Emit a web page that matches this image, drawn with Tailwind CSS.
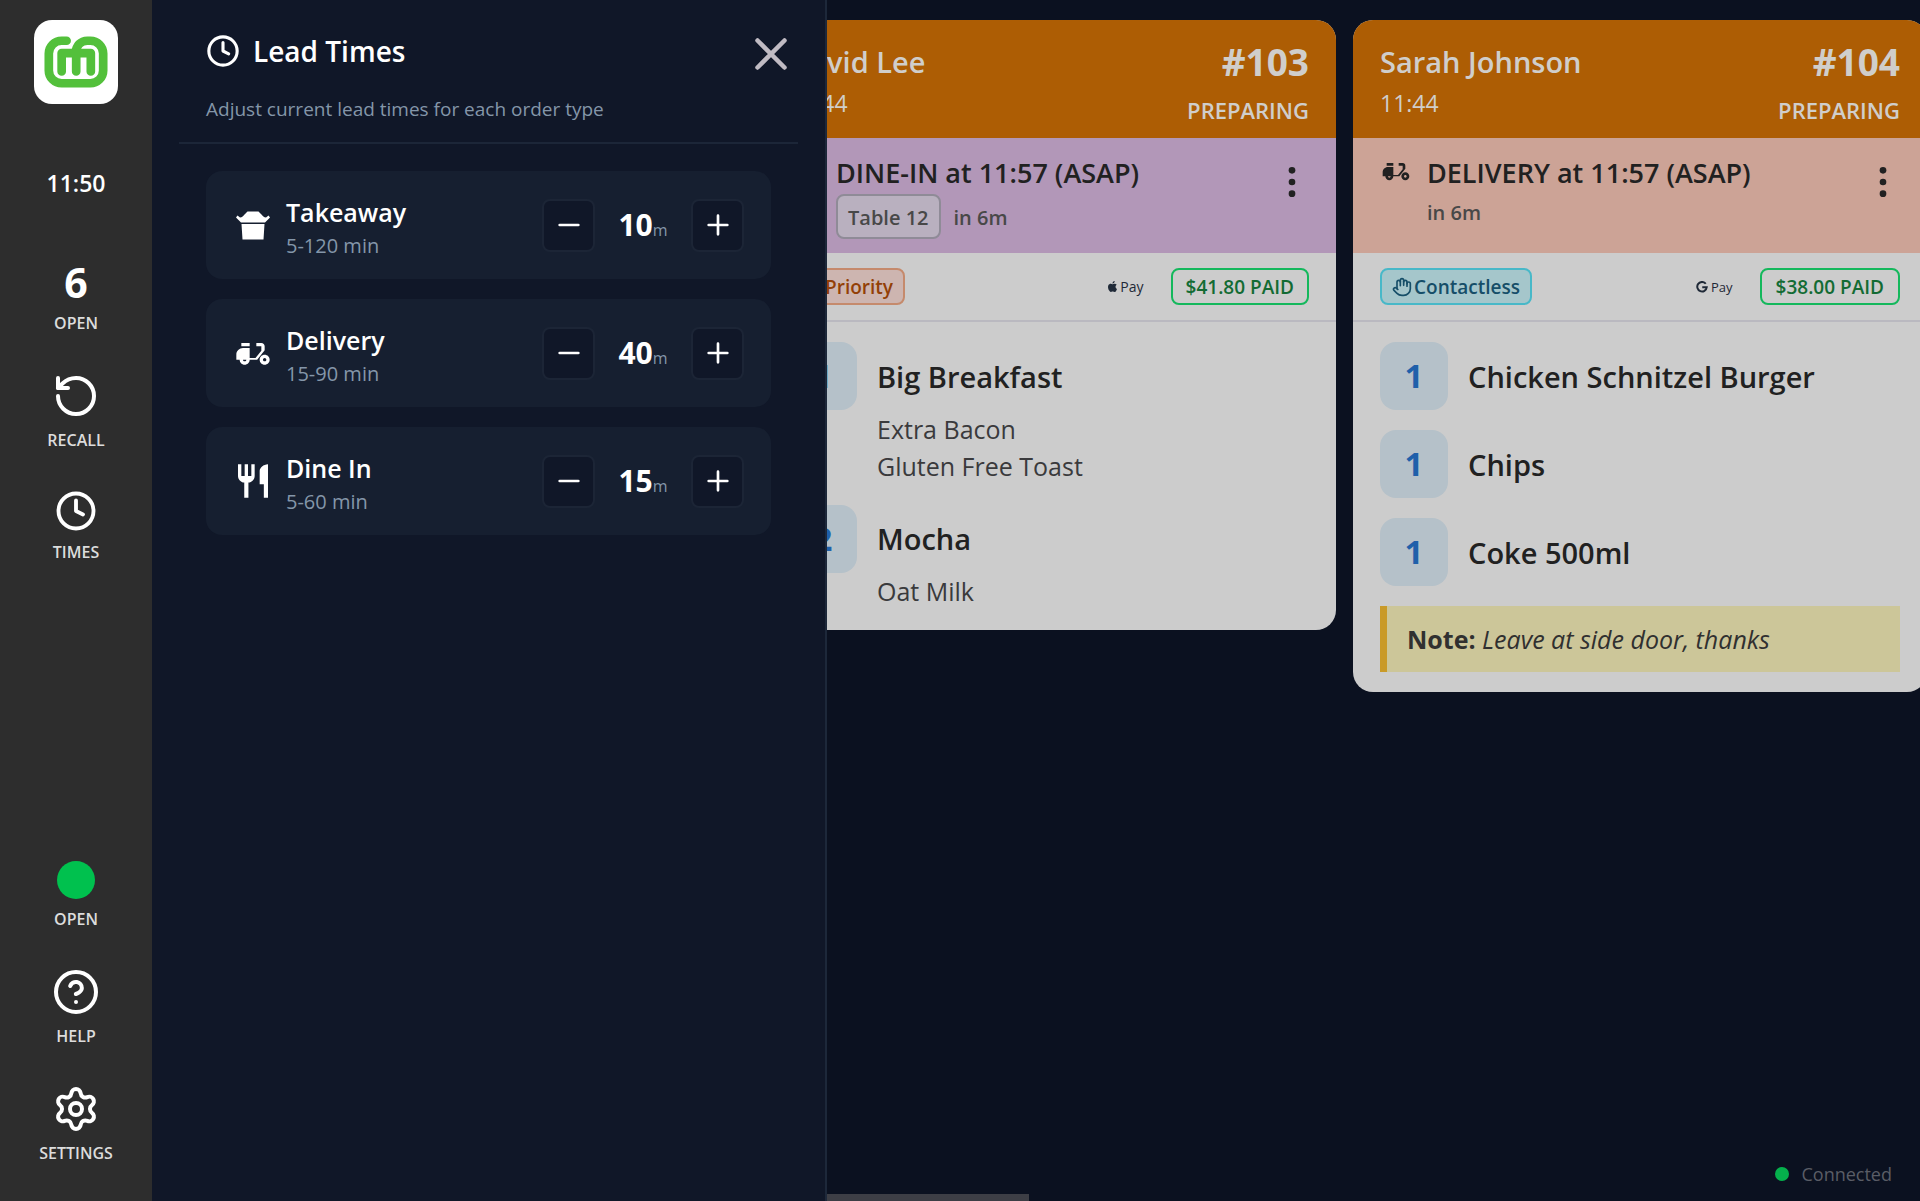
<!DOCTYPE html>
<html lang="en">
<head>
<meta charset="utf-8">
<title>Kitchen display – Lead Times</title>
<script src="https://cdn.jsdelivr.net/npm/@tailwindcss/browser@4"></script>
</head>
<body class="flex h-screen overflow-hidden bg-[#0b1120] font-['Open_Sans','Noto_Sans',sans-serif]">

<!-- shared symbols -->
<svg class="hidden" aria-hidden="true">
  <symbol id="moped" viewBox="0 0 24 24"><path fill="currentColor" fill-rule="evenodd" d="M19 15c.55 0 1 .45 1 1s-.45 1-1 1-1-.45-1-1 .45-1 1-1m0-2c-1.66 0-3 1.34-3 3s1.34 3 3 3 3-1.34 3-3-1.34-3-3-3M10 6H5v2h5V6m7 0h-3v2h3v2.65L13.5 15H10V9H6c-2.21 0-4 1.79-4 4v3h2c0 1.66 1.34 3 3 3s3-1.34 3-3h4.5L19 10.35V8c0-1.11-.89-2-2-2M7 17c-.55 0-1-.45-1-1h2c0 .55-.45 1-1 1z"/></symbol>
  <symbol id="cutlery" viewBox="0 0 24 24"><path fill="currentColor" d="M11 9H9V2H7v7H5V2H3v7c0 2.12 1.66 3.84 3.75 3.97V22h2.5v-9.03C11.34 12.84 13 11.12 13 9V2h-2v7m5-3v8h2.5v8H21V2c-2.76 0-5 2.24-5 4z"/></symbol>
  <symbol id="takeout" viewBox="0 0 40 40"><path fill="currentColor" d="M4.500 10.500 7 12.500C9 12.500 10.500 11 11.500 9.500L14.500 6.500H25.500L28.500 9.500C29.500 11 31 12.500 33 12.500L35.500 10.500 37 12.500 32 17.500H8L3 12.500ZM8.500 19H31.500L30.500 34.500H9.500Z"/></symbol>
  <symbol id="clock" viewBox="0 0 24 24"><g fill="none" stroke="currentColor" stroke-width="2.200" stroke-linecap="round" stroke-linejoin="round"><circle cx="12" cy="12" r="10"/><path d="M12 6v6l4 2"/></g></symbol>
  <symbol id="minus" viewBox="0 0 24 24"><path d="M5 12h14" fill="none" stroke="currentColor" stroke-width="2" stroke-linecap="round"/></symbol>
  <symbol id="plus" viewBox="0 0 24 24"><path d="M5 12h14M12 5v14" fill="none" stroke="currentColor" stroke-width="2" stroke-linecap="round"/></symbol>
  <symbol id="dots" viewBox="3 0 18 24"><g fill="currentColor"><circle cx="12" cy="5" r="2"/><circle cx="12" cy="12" r="2"/><circle cx="12" cy="19" r="2"/></g></symbol>
</svg>

<!-- sidebar -->
<nav class="flex w-[152px] shrink-0 flex-col items-center justify-between bg-[#2d2d2d] pt-5 pb-9 text-white">
  <div class="flex flex-col items-center">
    <svg class="size-[84px] rounded-[18px] bg-white" viewBox="0 0 85 85" fill="none" stroke="#53c03b" stroke-width="8.800" stroke-linecap="round" stroke-linejoin="round" role="img" aria-label="Logo">
      <path d="M33 21H28A13 13 0 0 0 15 34V51A13 13 0 0 0 28 64H57A13 13 0 0 0 70 51V34A13 13 0 0 0 57 21H54C47 21 43 26 42 33"/>
      <path d="M28 52V33.500H57.500V52M42.700 33V52"/>
    </svg>
    <time class="mt-[59px] text-[23px] leading-10 font-semibold">11:50</time>
    <button type="button" class="mt-[55px] flex flex-col items-center">
      <span class="text-[41px] leading-12 font-bold">6</span>
      <span class="mt-[5px] text-base font-semibold text-[#dcdcdc]">OPEN</span>
    </button>
    <button type="button" class="mt-[37px] flex flex-col items-center gap-2">
      <svg class="size-12" viewBox="0 0 24 24" fill="none" stroke="currentColor" stroke-width="2" stroke-linecap="round" stroke-linejoin="round"><path d="M3 12a9 9 0 1 0 9-9 9.750 9.750 0 0 0-6.740 2.740L3 8"/><path d="M3 3v5h5"/></svg>
      <span class="text-base font-semibold text-[#dcdcdc]">RECALL</span>
    </button>
    <button type="button" class="mt-[38px] flex flex-col items-center gap-2">
      <svg class="size-[42px]"><use href="#clock"/></svg>
      <span class="text-base font-semibold text-[#dcdcdc]">TIMES</span>
    </button>
  </div>
  <div class="flex flex-col items-center gap-[37px]">
    <button type="button" class="flex flex-col items-center gap-2">
      <span class="size-[38px] rounded-full bg-[#00c14e]"></span>
      <span class="text-base font-semibold text-[#dcdcdc]">OPEN</span>
    </button>
    <button type="button" class="flex flex-col items-center gap-2">
      <svg class="size-12" viewBox="0 0 24 24" fill="none" stroke="currentColor" stroke-width="2" stroke-linecap="round" stroke-linejoin="round"><circle cx="12" cy="12" r="10"/><path d="M9.090 9a3 3 0 0 1 5.830 1c0 2-3 3-3 3"/><path d="M12 17h.01"/></svg>
      <span class="text-base font-semibold text-[#dcdcdc]">HELP</span>
    </button>
    <button type="button" class="flex flex-col items-center gap-2">
      <svg class="size-12" viewBox="0 0 24 24" fill="none" stroke="currentColor" stroke-width="2" stroke-linecap="round" stroke-linejoin="round"><path d="M9.671 4.136a2.340 2.340 0 0 1 4.659 0 2.340 2.340 0 0 0 3.319 1.915 2.340 2.340 0 0 1 2.330 4.033 2.340 2.340 0 0 0 0 3.831 2.340 2.340 0 0 1-2.330 4.033 2.340 2.340 0 0 0-3.319 1.915 2.340 2.340 0 0 1-4.659 0 2.340 2.340 0 0 0-3.320-1.915 2.340 2.340 0 0 1-2.330-4.033 2.340 2.340 0 0 0 0-3.831A2.340 2.340 0 0 1 6.350 6.051a2.340 2.340 0 0 0 3.319-1.915"/><circle cx="12" cy="12" r="3"/></svg>
      <span class="text-base font-semibold text-[#dcdcdc]">SETTINGS</span>
    </button>
  </div>
</nav>

<main class="relative min-w-0 flex-1 overflow-hidden">
  <!-- order board -->
  <div class="flex items-start gap-[17px] pt-5 pl-[610px]">

    <article class="w-[574px] shrink-0 overflow-hidden rounded-[20px] bg-[#cccccc] text-[#212121]">
      <header class="flex h-[118px] justify-between bg-[#ad5d04] px-[27px] pt-[22px] text-[#d0cecb]">
        <div>
          <h2 class="text-[29px] leading-10 font-semibold">David Lee</h2>
          <p class="text-[23px] leading-[42px]">11:44</p>
        </div>
        <div class="text-right">
          <p class="text-[37px] leading-10 font-bold">#103</p>
          <p class="mt-2 text-[22px] leading-10 font-semibold">PREPARING</p>
        </div>
      </header>
      <div class="flex h-[115px] items-start gap-[15px] bg-[#b297b8] px-[27px] pt-[15px]">
        <svg class="mt-1 size-8"><use href="#cutlery"/></svg>
        <div class="flex-1">
          <p class="text-[27px] leading-10 font-semibold">DINE-IN at 11:57 (ASAP)</p>
          <div class="mt-px flex items-center gap-[13px] text-[20px] font-semibold text-[#484848]">
            <span class="flex h-[45px] items-center rounded-lg border-2 border-[#8f8b97] bg-[#b9b0bf] px-[10px] pt-[2px]">Table 12</span>
            <span class="pt-[2px]">in 6m</span>
          </div>
        </div>
        <button type="button" aria-label="Order options" class="mt-[9px] px-[2px]"><svg class="h-10 w-[30px]"><use href="#dots"/></svg></button>
      </div>
      <div class="flex h-[69px] items-center justify-between border-b-2 border-[#bab9c0] px-[27px]">
        <span class="flex h-[37px] items-center rounded-lg border-2 border-[#c58a6c] bg-[#cdb5b0] px-[10px] pt-[2px] text-[19px] font-semibold text-[#933f06]"><span class="w-6"></span>Priority</span>
        <div class="flex items-center gap-[27px]">
          <span class="flex items-center gap-[2px] text-[14px] leading-5 text-[#1f2937]">
            <svg class="size-[11px]" viewBox="0 0 24 24" fill="currentColor"><path d="M12.152 6.896c-.948 0-2.415-1.078-3.960-1.040-2.040.027-3.910 1.183-4.961 3.014-2.117 3.675-.546 9.103 1.519 12.090 1.013 1.454 2.208 3.090 3.792 3.039 1.520-.065 2.090-.987 3.935-.987 1.831 0 2.350.987 3.960.948 1.637-.026 2.676-1.480 3.676-2.948 1.156-1.688 1.636-3.325 1.662-3.415-.039-.013-3.182-1.221-3.220-4.857-.026-3.040 2.480-4.494 2.597-4.559-1.429-2.090-3.623-2.324-4.390-2.376-2-.156-3.675 1.090-4.610 1.090zM15.530 3.830c.843-1.012 1.400-2.427 1.245-3.830-1.207.052-2.662.805-3.532 1.818-.780.896-1.454 2.338-1.273 3.714 1.338.104 2.715-.688 3.559-1.701"/></svg>Pay
          </span>
          <span class="flex h-[37px] items-center rounded-lg border-2 border-[#14b85c] px-[13px] pt-[2px] text-[19px] font-semibold text-[#136b33]">$41.80 PAID</span>
        </div>
      </div>
      <ul class="flex flex-col gap-5 px-[27px] py-5">
        <li class="flex gap-5">
          <span class="flex size-[68px] shrink-0 items-center justify-center rounded-2xl bg-[#b5c1c9] text-[33px] font-bold text-[#1f60aa]">1</span>
          <div class="text-[25px] leading-[37px] text-[#3a3a3c]">
            <h3 class="pt-px text-[29px] leading-[68px] font-semibold text-[#212121]">Big Breakfast</h3>
            <p>Extra Bacon</p>
            <p>Gluten Free Toast</p>
          </div>
        </li>
        <li class="flex gap-5">
          <span class="flex size-[68px] shrink-0 items-center justify-center rounded-2xl bg-[#b5c1c9] text-[33px] font-bold text-[#1f60aa]">2</span>
          <div class="text-[25px] leading-[37px] text-[#3a3a3c]">
            <h3 class="text-[29px] leading-[68px] font-semibold text-[#212121]">Mocha</h3>
            <p>Oat Milk</p>
          </div>
        </li>
      </ul>
    </article>

    <article class="w-[574px] shrink-0 overflow-hidden rounded-[20px] bg-[#cccccc] text-[#212121]">
      <header class="flex h-[118px] justify-between bg-[#ad5d04] px-[27px] pt-[22px] text-[#d0cecb]">
        <div>
          <h2 class="text-[29px] leading-10 font-semibold">Sarah Johnson</h2>
          <p class="text-[23px] leading-[42px]">11:44</p>
        </div>
        <div class="text-right">
          <p class="text-[37px] leading-10 font-bold">#104</p>
          <p class="mt-2 text-[22px] leading-10 font-semibold">PREPARING</p>
        </div>
      </header>
      <div class="flex h-[115px] items-start gap-[15px] bg-[#cca396] px-[27px] pt-[15px]">
        <svg class="mt-[2px] size-8"><use href="#moped"/></svg>
        <div class="flex-1">
          <p class="text-[27px] leading-10 font-semibold">DELIVERY at 11:57 (ASAP)</p>
          <p class="mt-px text-[20px] leading-[38px] font-semibold text-[#484848]">in 6m</p>
        </div>
        <button type="button" aria-label="Order options" class="mt-[9px] px-[2px]"><svg class="h-10 w-[30px]"><use href="#dots"/></svg></button>
      </div>
      <div class="flex h-[69px] items-center justify-between border-b-2 border-[#bab9c0] px-[27px]">
        <span class="flex h-[37px] items-center gap-[2px] rounded-lg border-2 border-[#48b8c8] bg-[#a5c6cb] px-[10px] text-[19px] font-semibold text-[#164e68]">
          <svg class="size-5" viewBox="0 0 24 24" fill="none" stroke="currentColor" stroke-width="2" stroke-linecap="round" stroke-linejoin="round"><path d="M18 11V6a2 2 0 0 0-4 0"/><path d="M14 10V4a2 2 0 0 0-4 0v2"/><path d="M10 10.500V6a2 2 0 0 0-4 0v8"/><path d="M18 8a2 2 0 1 1 4 0v6a8 8 0 0 1-8 8h-2c-2.800 0-4.500-.860-5.990-2.340l-3.600-3.600a2 2 0 0 1 2.830-2.820L7 15"/></svg><span class="pt-[2px]">Contactless</span>
        </span>
        <div class="flex items-center gap-[27px]">
          <span class="flex items-center gap-[3px] text-[13px] leading-5 text-[#1f2937]">
            <svg class="size-3" viewBox="0 0 24 24" fill="none" stroke="currentColor" stroke-width="4"><path d="M19.500 5.500A9.500 9.500 0 1 0 21.500 12.500H12.500"/></svg>Pay
          </span>
          <span class="flex h-[37px] items-center rounded-lg border-2 border-[#14b85c] px-[14px] pt-[2px] text-[19px] font-semibold text-[#136b33]">$38.00 PAID</span>
        </div>
      </div>
      <div class="flex flex-col gap-5 px-[27px] py-5">
        <ul class="flex flex-col gap-5">
          <li class="flex gap-5">
            <span class="flex size-[68px] shrink-0 items-center justify-center rounded-2xl bg-[#b5c1c9] text-[33px] font-bold text-[#1f60aa]">1</span>
            <h3 class="text-[29px] leading-[70px] -mb-[2px] font-semibold">Chicken Schnitzel Burger</h3>
          </li>
          <li class="flex gap-5">
            <span class="flex size-[68px] shrink-0 items-center justify-center rounded-2xl bg-[#b5c1c9] text-[33px] font-bold text-[#1f60aa]">1</span>
            <h3 class="text-[29px] leading-[70px] -mb-[2px] font-semibold">Chips</h3>
          </li>
          <li class="flex gap-5">
            <span class="flex size-[68px] shrink-0 items-center justify-center rounded-2xl bg-[#b5c1c9] text-[33px] font-bold text-[#1f60aa]">1</span>
            <h3 class="text-[29px] leading-[70px] -mb-[2px] font-semibold">Coke 500ml</h3>
          </li>
        </ul>
        <p class="border-l-[7px] border-[#c99a28] bg-[#ccc699] px-5 text-[25px] leading-[66px] text-[#303030]"><strong class="font-bold">Note:</strong> <em>Leave at side door, thanks</em></p>
      </div>
    </article>
  </div>

  <!-- board scrollbar thumb -->
  <div class="absolute bottom-0 left-5 h-[7px] w-[857px] bg-[#3d3e45]"></div>

  <p class="absolute right-7 bottom-[13px] flex items-center gap-3 text-lg text-[#5a5d66]"><span class="size-[14px] rounded-full bg-[#05b04c]"></span>Connected</p>

  <!-- lead times drawer -->
  <section aria-label="Lead Times" class="absolute inset-y-0 left-0 w-[675px] border-r-2 border-[#1d283a] bg-[#101728] px-[27px] text-white">
    <header class="border-b-2 border-[#1c2638] px-[27px] pt-[27px] pb-[19px]">
      <div class="flex items-start justify-between">
        <h1 class="flex h-12 items-center gap-[13px] text-[28px] leading-10 font-semibold"><svg class="size-[34px]"><use href="#clock"/></svg>Lead Times</h1>
        <button type="button" aria-label="Close" class="-mr-[27px] text-[#c0bbc3]"><svg class="size-[54px]" viewBox="0 0 24 24" fill="none" stroke="currentColor" stroke-width="2" stroke-linecap="round"><path d="M18 6 6 18M6 6l12 12"/></svg></button>
      </div>
      <p class="mt-[14px] text-[19px] leading-7 text-[#8496a9]">Adjust current lead times for each order type</p>
    </header>
    <ul class="flex flex-col gap-5 px-[27px] pt-[27px]">
      <li class="flex h-[108px] items-center rounded-2xl bg-[#161f30] px-[27px]">
        <svg class="size-10"><use href="#takeout"/></svg>
        <div class="ml-[13px] flex-1 pt-2">
          <h2 class="text-[25px] leading-[34px] font-semibold">Takeaway</h2>
          <p class="text-[20px] leading-[34px] text-[#8496a9]">5-120 min</p>
        </div>
        <button type="button" aria-label="Decrease takeaway time" class="flex size-[53px] items-center justify-center rounded-lg border-2 border-[#1c2536] bg-[#101728]"><svg class="size-8"><use href="#minus"/></svg></button>
        <p class="w-24 text-center text-[30px] leading-10 font-bold">10<span class="text-base font-normal text-[#8496a9]">m</span></p>
        <button type="button" aria-label="Increase takeaway time" class="flex size-[53px] items-center justify-center rounded-lg border-2 border-[#1c2536] bg-[#101728]"><svg class="size-8"><use href="#plus"/></svg></button>
      </li>
      <li class="flex h-[108px] items-center rounded-2xl bg-[#161f30] px-[27px]">
        <svg class="size-10"><use href="#moped"/></svg>
        <div class="ml-[13px] flex-1 pt-2">
          <h2 class="text-[25px] leading-[34px] font-semibold">Delivery</h2>
          <p class="text-[20px] leading-[34px] text-[#8496a9]">15-90 min</p>
        </div>
        <button type="button" aria-label="Decrease delivery time" class="flex size-[53px] items-center justify-center rounded-lg border-2 border-[#1c2536] bg-[#101728]"><svg class="size-8"><use href="#minus"/></svg></button>
        <p class="w-24 text-center text-[30px] leading-10 font-bold">40<span class="text-base font-normal text-[#8496a9]">m</span></p>
        <button type="button" aria-label="Increase delivery time" class="flex size-[53px] items-center justify-center rounded-lg border-2 border-[#1c2536] bg-[#101728]"><svg class="size-8"><use href="#plus"/></svg></button>
      </li>
      <li class="flex h-[108px] items-center rounded-2xl bg-[#161f30] px-[27px]">
        <svg class="size-10"><use href="#cutlery"/></svg>
        <div class="ml-[13px] flex-1 pt-2">
          <h2 class="text-[25px] leading-[34px] font-semibold">Dine In</h2>
          <p class="text-[20px] leading-[34px] text-[#8496a9]">5-60 min</p>
        </div>
        <button type="button" aria-label="Decrease dine in time" class="flex size-[53px] items-center justify-center rounded-lg border-2 border-[#1c2536] bg-[#101728]"><svg class="size-8"><use href="#minus"/></svg></button>
        <p class="w-24 text-center text-[30px] leading-10 font-bold">15<span class="text-base font-normal text-[#8496a9]">m</span></p>
        <button type="button" aria-label="Increase dine in time" class="flex size-[53px] items-center justify-center rounded-lg border-2 border-[#1c2536] bg-[#101728]"><svg class="size-8"><use href="#plus"/></svg></button>
      </li>
    </ul>
  </section>
</main>
</body>
</html>
